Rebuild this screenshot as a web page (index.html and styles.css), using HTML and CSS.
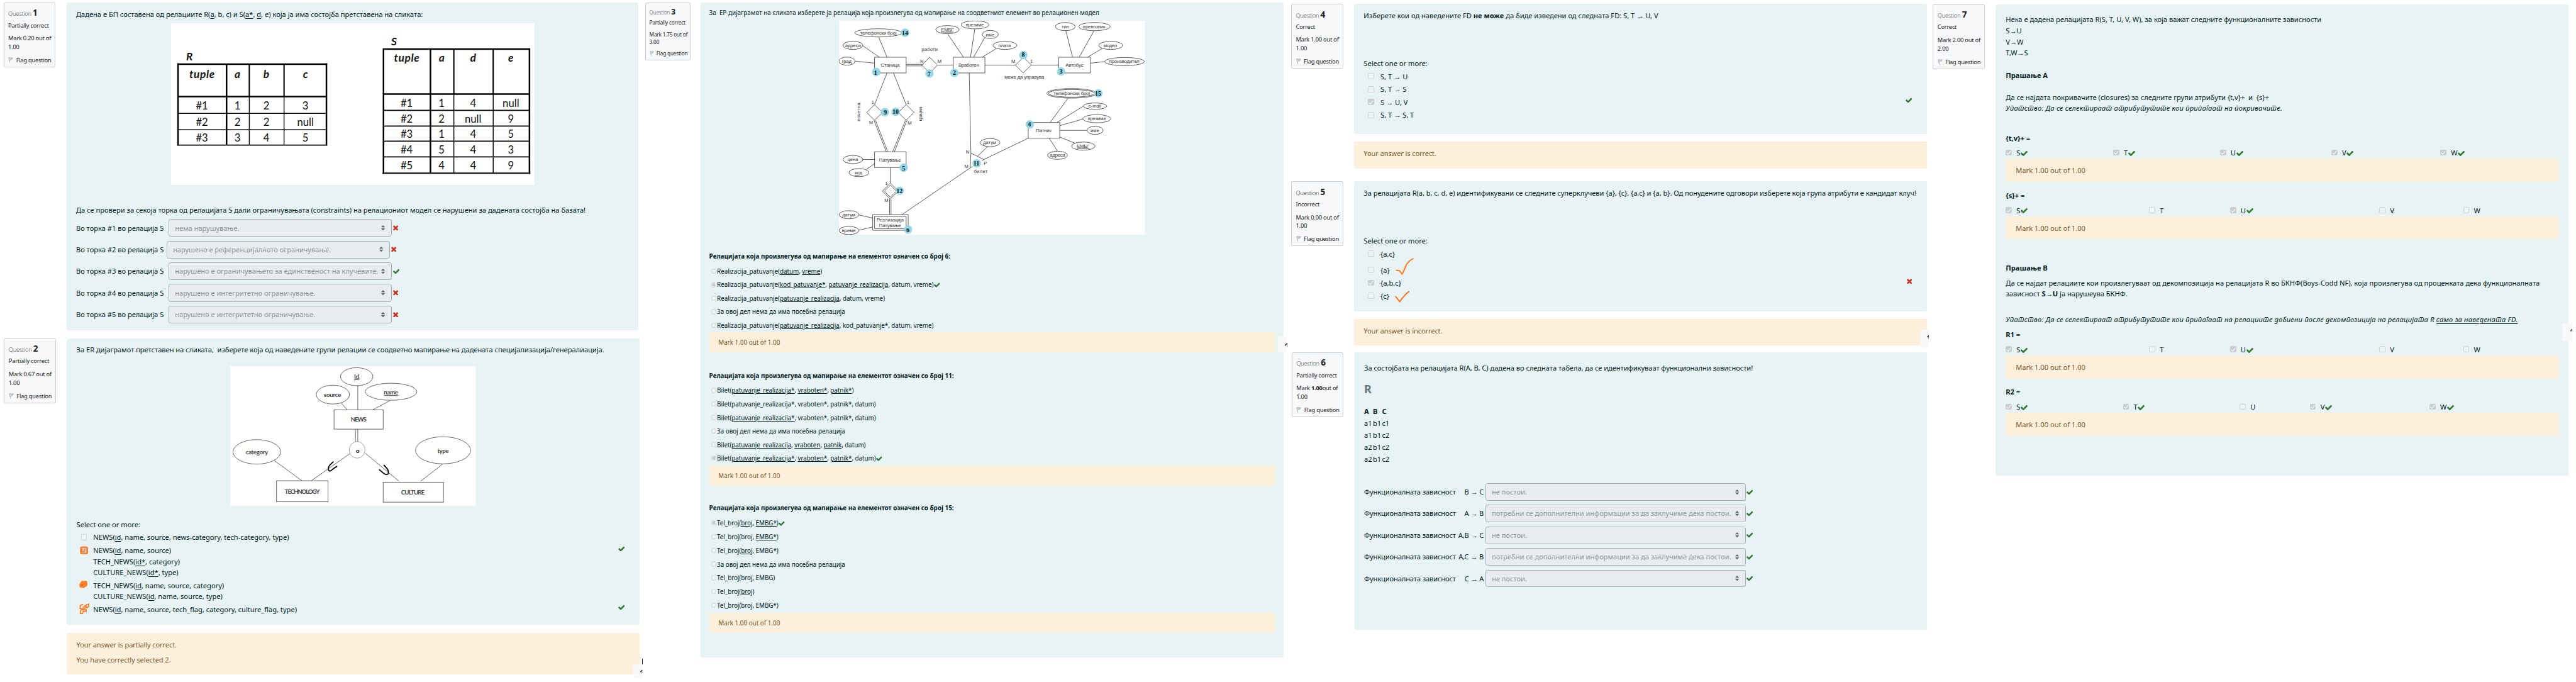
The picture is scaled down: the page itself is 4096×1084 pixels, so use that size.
FILE: index.html
```html
<!DOCTYPE html>
<html lang="mk">
<head>
<meta charset="utf-8">
<title>Quiz review</title>
<link rel="stylesheet" href="styles.css">
</head>
<body>
<svg class="defs" aria-hidden="true">
  <symbol id="tick" viewBox="120 240 1560 1240"><path d="M1671 566q0 40-28 68l-724 724-136 136q-28 28-68 28t-68-28l-136-136-362-362q-28-28-28-68t28-68l136-136q28-28 68-28t68 28l294 295 656-657q28-28 68-28t68 28l136 136q28 28 28 68z"/></symbol>
  <symbol id="cross" viewBox="300 230 1200 1200"><path d="M1490 1322q0 40-28 68l-136 136q-28 28-68 28t-68-28l-294-294-294 294q-28 28-68 28t-68-28l-136-136q-28-28-28-68t28-68l294-294-294-294q-28-28-28-68t28-68l136-136q28-28 68-28t68 28l294 294 294-294q28-28 68-28t68 28l136 136q28 28 28 68t-28 68l-294 294 294 294q28 28 28 68z" transform="translate(0 -94)"/></symbol>
  <symbol id="flag" viewBox="0 0 12 14"><path d="M1 1.2 4 13M1 1.2 11 1.6 8.6 4.6 3 7.6M3.2 3.2 8.6 4.6" fill="none" stroke="#868e96" stroke-width="1.1"/></symbol>
  <symbol id="sort" viewBox="0 0 9 12"><path d="M0 4.8 4.5 0 9 4.800zM0 7.200H9L4.500 12z" fill="#5f666c"/><path d="M.5 6H8.500" stroke="#9aa0a5" stroke-width=".8"/></symbol>
  <symbol id="up" viewBox="0 0 8 14"><path d="M8 0V14H5.600V5.500L0 11V7.500z" fill="#1d2125"/></symbol>
</svg>
<main class="board">

<div class="col col-a">
  <section class="question">
    <aside class="info"><p class="no">Question <b>1</b></p><p>Partially correct</p><p>Mark 0.20 out of<br>1.00</p><p class="flag"><svg><use href="#flag"/></svg><span>Flag question</span></p></aside>
    <div class="main">
      <div class="panel q1">
        <p class="line">Дадена е БП составена од релациите R(<u>a</u>, b, c) и S(<u>a*</u>, <u>d</u>, e) која ја има состојба претставена на сликата:</p>
        <svg class="pic pic-tables" viewBox="391 53.5 832 369.500">
          <rect x="391" y="53" width="832" height="371" fill="#fff"/>
          <g fill="none" stroke="#000">
            <path stroke-width="3.600" d="M405.500 147H748.500M407 221H746.500M407 145V333M746.500 145V333M518 147V332M875.500 112.400H1212.500M877 215.400H1211M877 111V398M1211 111V398M984.500 112V396"/>
            <path stroke-width="3" d="M570 147V221M649.500 147V221M1038 112V215M1128 112V215M875 396.400H1213"/>
            <path stroke-width="2.400" d="M407 259.600H746M407 297H746M405 332H748M877 252.700H1211M877 288.500H1211M877 323H1211M877 359H1211"/>
            <path stroke-width="2" d="M570 221V332M649.500 221V332M1038 215V396M1128 215V396"/>
          </g>
          <g class="th"><text x="433" y="138">R</text><text x="901" y="104">S</text><text x="461.600" y="178" textLength="58">tuple</text><text x="543" y="178">a</text><text x="609" y="178">b</text><text x="698.500" y="178">c</text><text x="930" y="141" textLength="58">tuple</text><text x="1010" y="141">a</text><text x="1082" y="141">d</text><text x="1168.500" y="141">e</text></g>
          <g class="td">
            <text x="461.600" y="251">#1</text><text x="543" y="251">1</text><text x="609" y="251">2</text><text x="698.500" y="251">3</text>
            <text x="461.600" y="288">#2</text><text x="543" y="288">2</text><text x="609" y="288">2</text><text x="698.500" y="288">null</text>
            <text x="461.600" y="324">#3</text><text x="543" y="324">3</text><text x="609" y="324">4</text><text x="698.500" y="324">5</text>
            <text x="930" y="245">#1</text><text x="1010" y="245">1</text><text x="1082" y="245">4</text><text x="1168.500" y="245">null</text>
            <text x="930" y="281.500">#2</text><text x="1010" y="281.500">2</text><text x="1082" y="281.500">null</text><text x="1168.500" y="281.500">9</text>
            <text x="930" y="316">#3</text><text x="1010" y="316">1</text><text x="1082" y="316">4</text><text x="1168.500" y="316">5</text>
            <text x="930" y="352">#4</text><text x="1010" y="352">5</text><text x="1082" y="352">4</text><text x="1168.500" y="352">3</text>
            <text x="930" y="387">#5</text><text x="1010" y="387">4</text><text x="1082" y="387">4</text><text x="1168.500" y="387">9</text>
          </g>
        </svg>
        <p class="line ask">Да се провери за секоја торка од релацијата S дали ограничувањата (constraints) на релациониот модел се нарушени за дадената состојба на базата!</p>
        <div class="selects">
          <div class="srow"><span class="lab">Во торка #1 во релација S</span><span class="select">нема нарушување.<svg><use href="#sort"/></svg></span><svg class="no-mark"><use href="#cross"/></svg></div>
          <div class="srow tight"><span class="lab">Во торка #2 во релација S</span><span class="select">нарушено е референцијалното ограничување.<svg><use href="#sort"/></svg></span><svg class="no-mark"><use href="#cross"/></svg></div>
          <div class="srow"><span class="lab">Во торка #3 во релација S</span><span class="select">нарушено е ограничувањето за единственост на клучевите.<svg><use href="#sort"/></svg></span><svg class="ok"><use href="#tick"/></svg></div>
          <div class="srow"><span class="lab">Во торка #4 во релација S</span><span class="select">нарушено е интегритетно ограничување.<svg><use href="#sort"/></svg></span><svg class="no-mark"><use href="#cross"/></svg></div>
          <div class="srow"><span class="lab">Во торка #5 во релација S</span><span class="select">нарушено е интегритетно ограничување.<svg><use href="#sort"/></svg></span><svg class="no-mark"><use href="#cross"/></svg></div>
        </div>
      </div>
    </div>
  </section>

  <section class="question second">
    <aside class="info"><p class="no">Question <b>2</b></p><p>Partially correct</p><p>Mark 0.67 out of<br>1.00</p><p class="flag"><svg><use href="#flag"/></svg><span>Flag question</span></p></aside>
    <div class="main">
      <div class="panel q2">
        <p class="line">За ER дијаграмот претставен на сликата,&nbsp; изберете која од наведените групи релации се соодветно мапирање на дадената специјализација/генералиација.</p>
        <svg class="pic pic-news" viewBox="527 838 562 320">
          <rect x="527" y="838" width="562" height="320" fill="#fff"/>
          <g fill="none" stroke="#555" stroke-width="1.300">
            <ellipse cx="816.500" cy="862" rx="37" ry="20.500"/><ellipse cx="895" cy="896.500" rx="59" ry="19.500"/><ellipse cx="762" cy="903" rx="38" ry="21.500"/>
            <ellipse cx="588" cy="1034" rx="54.500" ry="28"/><ellipse cx="1014" cy="1030.400" rx="63" ry="31"/><ellipse cx="817.500" cy="1029.400" rx="18" ry="19" stroke="#999"/>
            <rect x="764.600" y="938" width="112.400" height="44"/><rect x="633" y="1100" width="118" height="48"/><rect x="877" y="1103.400" width="138" height="45.600"/>
            <path d="M781.500 923 795 938M819 883V938M893 916.600 853 938M813.600 982V1010.500M819 982V1010.500M627 1053 691 1100M801 1038 712.600 1100M836 1037 913 1101M1013 1062 963 1101"/>
            <path stroke="#000" stroke-width="2.600" stroke-linecap="round" d="M762.700 1057C755 1063 751 1068 751.500 1073C752 1079 757 1079 761 1074L771 1067M879 1064.600C887 1072 891 1079 888.500 1084C886 1087 881 1086 877 1082L868.400 1074.800"/>
          </g>
          <g class="er"><text x="816.500" y="867" text-decoration="underline">Id</text><text x="895" y="903" text-decoration="underline" textLength="33">name</text><text x="761" y="908" textLength="39">source</text><text x="821" y="965" textLength="36">NEWS</text><text x="588" y="1039" textLength="51">category</text><text x="1014" y="1036" textLength="26">type</text><text x="819" y="1037" class="heavy">o</text><text x="692" y="1130" textLength="80">TECHNOLOGY</text><text x="945" y="1131.500" textLength="54">CULTURE</text></g>
        </svg>
        <p class="line pick">Select one or more:</p>
        <ul class="answers">
          <li><i class="box"></i><div>NEWS(<u>id</u>, name, source, news-category, tech-category, type)</div></li>
          <li><svg class="scribble" viewBox="0 0 24 26"><rect x="3.500" y="5.500" width="15" height="14.500" rx="3.500" fill="#c9c9c9" stroke="#fd7e26" stroke-width="3.500"/><path d="M6 9V16L11 15.500 13 9" fill="none" stroke="#fd7e26" stroke-width="2.500"/></svg><div>NEWS(<u>id</u>, name, source)<br>TECH_NEWS(<u>id*</u>, category)<br>CULTURE_NEWS(<u>id*</u>, type)</div><svg class="ok side"><use href="#tick"/></svg></li>
          <li><svg class="scribble" viewBox="0 0 24 26"><path d="M5 4 17 3.500 18.500 13 11 19 2 18 0 12.500 3 8z" fill="#fd7e26" stroke="#fd7e26"/><rect x="6" y="12" width="1.600" height="1.200"/><path d="M12 18.500Q18 18 18 14" fill="none" stroke="#ccc"/></svg><div>TECH_NEWS(<u>id</u>, name, source, category)<br>CULTURE_NEWS(<u>id</u>, name, source, type)</div></li>
          <li><svg class="scribble" viewBox="0 0 24 26"><path d="M9 2.500 3 4 1.500 12 8 12.500 6 15 3 16 2.500 23.500 7.500 23 9 18 16 18.500 16 14.500 8 14.500 13 10.500 19 10 13 6 8 9.500M12 6 21.500 1.500 21.500 8 15 9" fill="none" stroke="#fd7e26" stroke-width="2.600" stroke-linejoin="round"/></svg><div>NEWS(<u>id</u>, name, source, tech_flag, category, culture_flag, type)</div><svg class="ok side"><use href="#tick"/></svg></li>
        </ul>
      </div>
      <div class="feedback two"><p class="line">Your answer is partially correct.</p><p class="line">You have correctly selected 2.</p></div>
    </div>
  </section>
  <div class="totop top-a"><svg><use href="#up"/></svg></div>
  <i class="edge"></i>
</div>

<div class="col col-b">
  <section class="question">
    <aside class="info small"><p class="no">Question <b>3</b></p><p>Partially correct</p><p>Mark 1.75 out of<br>3.00</p><p class="flag"><svg><use href="#flag"/></svg><span>Flag question</span></p></aside>
    <div class="main">
      <div class="panel q3">
        <p class="line">За&nbsp; ЕР дијаграмот на сликата изберете ја релација која произлегува од мапирање на соодветниот елемент во релационен модел</p>
        <svg class="pic pic-bus" viewBox="1920 48 700 489">
          <rect x="1920" y="48" width="700" height="489" fill="#fff"/>
          <g transform="matrix(.4719 0 0 .3333 1900 30)" class="shapes">
            <path d="M235 165 275 304M158 225 238 304M120 331 215 345M368 353H447M368 364H447M520 358H597M568 142 646 304M701 110 680 304M749 170 695 304M806 244 737 304M750 358H898M975 358H1108M1142 122 1175 304M1279 122 1207 304M1319 244 1248 304M1331 334 1262 345M275 413 215 629M307 413 368 629M212 737 272 953M219 737 279 953M365 737 303 953M372 737 311 953M158 1006H215M174 1076 215 1034M291 1061V1170M288 1278V1385M295 1278V1385M139 1386 206 1408M139 1491 206 1469M348 1384 690 1053M674 413 682 962 679 1061M682 962 745 1006 735 1014M745 1006 960 860M763 918 713 985M1152 587 1066 752M1226 641 1099 752M1226 728 1113 774M1245 806H1113M1187 894 1113 852M1102 949 1062 860"/>
            <g class="solid">
              <path d="M482 304 520 358 482 413 444 358zM937 304 975 358 936 412 898 358zM215 629 253 683 215 737 177 683zM368 629 406 683 368 737 330 683zM291 1168 330 1223 291 1277 253 1223zM291 1181 321 1223 291 1265 262 1223z"/>
              <path d="M215 304H368V412H215zM597 304H750V412H597zM1108 304H1262V412H1108zM960 752H1113V860H960zM215 953H368V1061H215zM206 1384H378V1492H206zM215 1397H368V1480H215z"/>
              <ellipse cx="233" cy="137" rx="114" ry="28"/><ellipse cx="110" cy="223" rx="48" ry="28"/><ellipse cx="81" cy="331" rx="39" ry="28"/><ellipse cx="568" cy="115" rx="57" ry="28"/><ellipse cx="702" cy="82" rx="67" ry="28"/><ellipse cx="776" cy="148" rx="39" ry="28"/><ellipse cx="847" cy="223" rx="58" ry="28"/><ellipse cx="1140" cy="94" rx="48" ry="28"/><ellipse cx="1281" cy="94" rx="76" ry="28"/><ellipse cx="1360" cy="223" rx="58" ry="28"/><ellipse cx="1427" cy="334" rx="96" ry="28"/><ellipse cx="1170" cy="552" rx="120" ry="33"/><ellipse cx="1170" cy="552" rx="112" ry="26"/><ellipse cx="1284" cy="640" rx="57" ry="22"/><ellipse cx="1293" cy="726" rx="67" ry="28"/><ellipse cx="1284" cy="806" rx="39" ry="28"/><ellipse cx="1227" cy="914" rx="57" ry="28"/><ellipse cx="1102" cy="977" rx="48" ry="28"/><ellipse cx="775" cy="890" rx="48" ry="28"/><ellipse cx="110" cy="1006" rx="48" ry="28"/><ellipse cx="139" cy="1096" rx="48" ry="28"/><ellipse cx="91" cy="1385" rx="48" ry="28"/><ellipse cx="91" cy="1493" rx="48" ry="28"/>
            </g>
          </g>
          <g class="dots"><circle cx="2005.200" cy="165" r="9.600"/><circle cx="2184" cy="167" r="9.600"/><circle cx="2428" cy="164" r="9.600"/><circle cx="2356.800" cy="285" r="9.600"/><circle cx="2068" cy="384" r="9.600"/><circle cx="2078" cy="525.300" r="9.600"/><circle cx="2127" cy="168.700" r="9.600"/><circle cx="2341.700" cy="126.300" r="9.600"/><circle cx="2025" cy="257" r="9.600"/><circle cx="2049.600" cy="256.300" r="9.600"/><circle cx="2235" cy="374" r="9.600"/><circle cx="2058.600" cy="436.700" r="9.600"/><circle cx="2071.300" cy="75.300" r="9.600"/><circle cx="2513.500" cy="214" r="9.600"/></g>
          <g class="bus">
            <text x="2010" y="79.500" textLength="83">телефонски број</text><text x="1952" y="108" textLength="36">адреса</text><text x="1937.800" y="144" textLength="22">град</text><text x="2127.500" y="117" textLength="37">работи</text><text x="2037.300" y="153.700" textLength="42.500">Станица</text><text x="2109.500" y="144">N</text><text x="2150" y="144">M</text><text x="2217" y="153.700" textLength="47.500">Вработен</text><text x="2168" y="72" textLength="29" text-decoration="underline">ЕМБГ</text><text x="2230.800" y="61.500" textLength="42">презиме</text><text x="2266" y="83.500" textLength="20">име</text><text x="2299" y="108" textLength="28.500">плата</text><text x="2319" y="145">M</text><text x="2360.600" y="145">1</text><text x="2344" y="180.500" textLength="90.600">може да управува</text><text x="2458.700" y="153.700" textLength="40.600">Автобус</text><text x="2438" y="65" textLength="17">тип</text><text x="2503.600" y="65" textLength="51">превозник</text><text x="2540.800" y="108.500" textLength="31">модел</text><text x="2573" y="145" textLength="69">производител</text><text x="2452.600" y="218.300" textLength="83">телефонски број</text><text x="2505.400" y="247" textLength="30">e-mail</text><text x="2510" y="276" textLength="42">презиме</text><text x="2505.400" y="303" textLength="20">име</text><text x="2388.400" y="303" textLength="35.400">Патник</text><text x="2478.500" y="339" textLength="29" text-decoration="underline">ЕМБГ</text><text x="2420" y="359.500" textLength="35">адреса</text><text x="2264.800" y="330.500" textLength="30">датум</text><text x="2214.300" y="352">N</text><text x="2211.500" y="385">M</text><text x="2254.900" y="378">P</text><text x="2244.500" y="396.300" textLength="31">билет</text><text x="2036.900" y="369.700" textLength="50">Патување</text><text x="1951.400" y="369.500" textLength="24">цена</text><text x="1964.700" y="399.500" textLength="17" text-decoration="underline">код</text><text transform="translate(1969.500 256.700) rotate(-90)" textLength="42.700">почетна</text><text transform="translate(2109.500 261) rotate(-90)" textLength="32.700">крајна</text><text x="1997.700" y="237.500">1</text><text x="2078" y="238.500">1</text><text x="1993.400" y="284">M</text><text x="2081.700" y="285">M</text><text x="2028.400" y="424">1</text><text x="2028.400" y="462.500">M</text><text x="1942.500" y="495.500" textLength="30">датум</text><text x="1942.500" y="531.500" textLength="31">време</text><text x="2037.300" y="507" textLength="62">Реализација</text><text x="2036.900" y="520" textLength="50">Патување</text>
          </g>
          <g class="nums"><text x="2004" y="172">1</text><text x="2184" y="172">2</text><text x="2428" y="169.500">3</text><text x="2355.500" y="290">4</text><text x="2068" y="390">5</text><text x="2077.500" y="531">6</text><text x="2126" y="174">7</text><text x="2341.700" y="130">8</text><text x="2026" y="262">9</text><text x="2049.600" y="261.500">10</text><text x="2234.500" y="379">11</text><text x="2058.600" y="442">12</text><text x="2071" y="80.500">14</text><text x="2513" y="219.500">15</text></g>
        </svg>
        <h3 class="line h-one">Релацијата која произлегува од мапирање на елементот означен со број 6:</h3>
        <ul class="radios">
          <li><i></i><span>Realizacija_patuvanje(<u>datum</u>, <u>vreme</u>)</span></li>
          <li><i class="on"></i><span>Realizacija_patuvanje(<u>kod_patuvanje*</u>, <u>patuvanje_realizacija</u>, datum, vreme)</span><svg class="ok"><use href="#tick"/></svg></li>
          <li><i></i><span>Realizacija_patuvanje(<u>patuvanje_realizacija</u>, datum, vreme)</span></li>
          <li><i></i><span class="mk">За овој дел нема да има посебна релација</span></li>
          <li><i></i><span>Realizacija_patuvanje(<u>patuvanje_realizacija</u>, kod_patuvanje*, datum, vreme)</span></li>
        </ul>
        <div class="mark">Mark 1.00 out of 1.00</div>
        <h3 class="line h-two">Релацијата која произлегува од мапирање на елементот означен со број 11:</h3>
        <ul class="radios">
          <li><i></i><span>Bilet(<u>patuvanje_realizacija*</u>, <u>vraboten*</u>, <u>patnik*</u>)</span></li>
          <li><i></i><span>Bilet(patuvanje_realizacija*, vraboten*, patnik*, datum)</span></li>
          <li><i></i><span>Bilet(<u>patuvanje_realizacija*</u>, vraboten*, patnik*, datum)</span></li>
          <li><i></i><span class="mk">За овој дел нема да има посебна релација</span></li>
          <li><i></i><span>Bilet(<u>patuvanje_realizacija</u>, <u>vraboten</u>, <u>patnik</u>, datum)</span></li>
          <li><i class="on"></i><span>Bilet(<u>patuvanje_realizacija*</u>, <u>vraboten*</u>, <u>patnik*</u>, datum)</span><svg class="ok"><use href="#tick"/></svg></li>
        </ul>
        <div class="mark">Mark 1.00 out of 1.00</div>
        <h3 class="line h-three">Релацијата која произлегува од мапирање на елементот означен со број 15:</h3>
        <ul class="radios last">
          <li><i class="on"></i><span>Tel_broj(<u>broj</u>, <u>EMBG*</u>)</span><svg class="ok"><use href="#tick"/></svg></li>
          <li><i></i><span>Tel_broj(broj, <u>EMBG*</u>)</span></li>
          <li><i></i><span>Tel_broj(<u>broj</u>, EMBG*)</span></li>
          <li><i></i><span class="mk">За овој дел нема да има посебна релација</span></li>
          <li><i></i><span>Tel_broj(broj, EMBG)</span></li>
          <li><i></i><span>Tel_broj(<u>broj</u>)</span></li>
          <li><i></i><span>Tel_broj(broj, EMBG*)</span></li>
        </ul>
        <div class="mark">Mark 1.00 out of 1.00</div>
      </div>
    </div>
  </section>
  <div class="totop top-b"><svg><use href="#up"/></svg></div>
</div>

<div class="col col-c">
  <section class="question">
    <aside class="info"><p class="no">Question <b>4</b></p><p>Correct</p><p>Mark 1.00 out of<br>1.00</p><p class="flag"><svg><use href="#flag"/></svg><span>Flag question</span></p></aside>
    <div class="main">
      <div class="panel q4">
        <p class="line">Изберете кои од наведените FD <b>не може</b> да биде изведени од следната FD: S, T → U, V</p>
        <p class="line pick">Select one or more:</p>
        <ul class="answers">
          <li><i class="box"></i><div>S, T → U</div></li>
          <li><i class="box"></i><div>S, T → S</div></li>
          <li><i class="box on"></i><div>S → U, V</div><svg class="ok side"><use href="#tick"/></svg></li>
          <li><i class="box"></i><div>S, T → S, T</div></li>
        </ul>
      </div>
      <div class="feedback">Your answer is correct.</div>
    </div>
  </section>
  <section class="question fifth">
    <aside class="info"><p class="no">Question <b>5</b></p><p>Incorrect</p><p>Mark 0.00 out of<br>1.00</p><p class="flag"><svg><use href="#flag"/></svg><span>Flag question</span></p></aside>
    <div class="main">
      <div class="panel q5">
        <p class="line snug">За релацијата R(a, b, c, d, e) идентификувани се следните суперклучеви {a}, {c}, {a,c} и {a, b}. Од понудените одговори изберете која група атрибути е кандидат клуч!</p>
        <p class="line pick">Select one or more:</p>
        <ul class="answers">
          <li><i class="box"></i><div>{a,c}</div></li>
          <li class="wide"><i class="box"></i><div>{a}</div><svg class="pen pen-a" viewBox="0 0 42 40"><path d="M2 28.500 9 29 15 37C20 28 22 22 25 15C29 10 32 5 40 2"/></svg></li>
          <li><i class="box on"></i><div>{a,b,c}</div><svg class="no-mark side"><use href="#cross"/></svg></li>
          <li><i class="box"></i><div>{c}</div><svg class="pen pen-b" viewBox="0 0 34 28"><path d="M2 14 11 25C16 18 23 9 32 2"/></svg></li>
        </ul>
      </div>
      <div class="feedback low">Your answer is incorrect.</div>
    </div>
  </section>
  <section class="question sixth">
    <aside class="info"><p class="no">Question <b>6</b></p><p>Partially correct</p><p>Mark <b class="patch">1.00</b>out of<br>1.00</p><p class="flag"><svg><use href="#flag"/></svg><span>Flag question</span></p></aside>
    <div class="main">
      <div class="panel q6">
        <p class="line snug">За состојбата на релацијата R(A, B, C) дадена во следната табела, да се идентификуваат функционални зависности!</p>
        <h2>R</h2>
        <div class="tuples">
          <b>A</b><b>B</b><b>C</b>
          <span>a1</span><span>b1</span><span>c1</span>
          <span>a1</span><span>b1</span><span>c2</span>
          <span>a2</span><span>b1</span><span>c2</span>
          <span>a2</span><span>b1</span><span>c2</span>
        </div>
        <div class="selects deps">
          <div class="srow"><span class="lab"><span>Функционалната зависност</span><span>B → C</span></span><span class="select">не постои.<svg><use href="#sort"/></svg></span><svg class="ok"><use href="#tick"/></svg></div>
          <div class="srow"><span class="lab"><span>Функционалната зависност</span><span>A → B</span></span><span class="select">потребни се дополнителни информации за да заклучиме дека постои.<svg><use href="#sort"/></svg></span><svg class="ok"><use href="#tick"/></svg></div>
          <div class="srow"><span class="lab"><span>Функционалната зависност</span><span>A,B → C</span></span><span class="select">не постои.<svg><use href="#sort"/></svg></span><svg class="ok"><use href="#tick"/></svg></div>
          <div class="srow"><span class="lab"><span>Функционалната зависност</span><span>A,C → B</span></span><span class="select">потребни се дополнителни информации за да заклучиме дека постои.<svg><use href="#sort"/></svg></span><svg class="ok"><use href="#tick"/></svg></div>
          <div class="srow"><span class="lab"><span>Функционалната зависност</span><span>C → A</span></span><span class="select">не постои.<svg><use href="#sort"/></svg></span><svg class="ok"><use href="#tick"/></svg></div>
        </div>
      </div>
    </div>
  </section>
  <div class="totop top-c"><svg><use href="#up"/></svg></div>
</div>

<div class="col col-d">
  <section class="question">
    <aside class="info"><p class="no">Question <b>7</b></p><p>Correct</p><p>Mark 2.00 out of<br>2.00</p><p class="flag"><svg><use href="#flag"/></svg><span>Flag question</span></p></aside>
    <div class="main">
      <div class="panel q7">
        <p class="line">Нека е дадена релацијата R(S, T, U, V, W), за која важат следните функционалните зависности</p>
        <p class="line">S→U</p><p class="line">V→W</p><p class="line">T,W→S</p>
        <h3 class="line part-a">Прашање A</h3>
        <p class="line closures">Да се најдата покривачите (closures) за следните групи атрибути {t,v}+&nbsp; и&nbsp; {s}+</p>
        <p class="line hint"><em>Упатство: Да се селектираат атрибутутите кои припаѓаат на покривачите.</em></p>
        <p class="line set-tv"><b>{t,v}+</b> =</p>
        <div class="checks all"><label><i class="box on"></i>S<svg class="ok"><use href="#tick"/></svg></label><label><i class="box on"></i>T<svg class="ok"><use href="#tick"/></svg></label><label><i class="box on"></i>U<svg class="ok"><use href="#tick"/></svg></label><label><i class="box on"></i>V<svg class="ok"><use href="#tick"/></svg></label><label><i class="box on"></i>W<svg class="ok"><use href="#tick"/></svg></label></div>
        <div class="mark">Mark 1.00 out of 1.00</div>
        <p class="line set-s"><b>{s}+</b> =</p>
        <div class="checks two"><label><i class="box on"></i>S<svg class="ok"><use href="#tick"/></svg></label><label><i class="box"></i>T</label><label><i class="box on"></i>U<svg class="ok"><use href="#tick"/></svg></label><label><i class="box"></i>V</label><label><i class="box"></i>W</label></div>
        <div class="mark">Mark 1.00 out of 1.00</div>
        <h3 class="line part-b">Прашање B</h3>
        <p class="line bcnf">Да се најдат релациите кои произлегуваат од декомпозиција на релацијата R во БКНФ(Boys-Codd NF), која произлегува од проценката дека функционалната<br>зависност <b>S→U</b> ја нарушеува БКНФ.</p>
        <p class="line hint-b"><em>Упатство: Да се селектираат атрибутутите кои припаѓаат на релациите добиени после декомпозиција на релацијата R <u>само за наведената FD.</u></em></p>
        <p class="line set-r1"><b>R1</b> =</p>
        <div class="checks two"><label><i class="box on"></i>S<svg class="ok"><use href="#tick"/></svg></label><label><i class="box"></i>T</label><label><i class="box on"></i>U<svg class="ok"><use href="#tick"/></svg></label><label><i class="box"></i>V</label><label><i class="box"></i>W</label></div>
        <div class="mark">Mark 1.00 out of 1.00</div>
        <p class="line set-r2"><b>R2</b> =</p>
        <div class="checks four"><label><i class="box on"></i>S<svg class="ok"><use href="#tick"/></svg></label><label><i class="box on"></i>T<svg class="ok"><use href="#tick"/></svg></label><label><i class="box"></i>U</label><label><i class="box on"></i>V<svg class="ok"><use href="#tick"/></svg></label><label><i class="box on"></i>W<svg class="ok"><use href="#tick"/></svg></label></div>
        <div class="mark">Mark 1.00 out of 1.00</div>
      </div>
    </div>
  </section>
  <div class="totop top-d"><svg><use href="#up"/></svg></div>
</div>
</main>
</body>
</html>
```
FILE: styles.css
```css
/* One rem is ten design pixels; the board is 589.2rem wide and 156rem high. */
html { font-size: 6.95px; }
* { box-sizing: border-box; }
body { margin: 0; background: #fff; color: #001a1e; font-family: "Noto Sans", "Open Sans", sans-serif; font-size: 1.6rem; line-height: 2.5rem; overflow: hidden; }
p, h2, h3, ul { margin: 0; padding: 0; list-style: none; font-size: inherit; }
svg { display: block; flex: none; }
u { text-underline-offset: .15em; }
.defs { position: absolute; width: 0; height: 0; }

.board { display: flex; width: 589.2rem; height: 156rem; }
.col { position: relative; flex: none; }
.col-a { width: 147rem; padding: .6rem 0 0 .8rem; }
.col-b { width: 147.6rem; padding: .6rem 0 0 .6rem; }
.col-c { width: 146.8rem; padding: .9rem 0 0 .8rem; }
.col-d { width: 147.8rem; padding: 1rem 0 0 .8rem; }

.question { display: flex; align-items: flex-start; gap: 2.5rem; white-space: nowrap; }
.second { margin: 1.9rem 0 0 .1rem; }
.fifth { margin-top: 3rem; }
.sixth { margin: 1.6rem 0 0 .1rem; }
.col-b .question { gap: 2.2rem; }

.info { flex: none; width: 11.9rem; height: 11.05em; padding: 1em .7em 0; border: 1px solid #cad0d7; border-radius: .3rem; background: #f8f9fb; color: #1d2125; font-size: 1.34rem; line-height: 1.48em; letter-spacing: -.024em; }
.info.small { width: 10.45rem; font-size: 1.19rem; }
.info .no { height: 1.48em; margin-bottom: .58em; font-size: 1em; color: #4a4f54; font-weight: 300; }
.info .no b { font-size: 1.45em; line-height: 1; color: #1d2125; font-weight: 700; }
.info p + p + p { margin-top: .74em; }
.flag { display: flex; align-items: center; gap: .45em; }
.flag svg { width: .9em; height: 1em; }
.patch { background: #fff; }

.panel { background: #e7f3f5; border-radius: .4rem; padding: 0 2.2rem; }
.line { min-height: 2.5rem; }
.snug { letter-spacing: -.0065rem; }
h3 { font-weight: 700; }
.pic text { text-anchor: middle; }
.feedback { margin-top: 1.8rem; height: 6.1rem; padding: 1.45rem 2.2rem; border-radius: .4rem; background: #fcefdc; color: #7d5a29; letter-spacing: -.018rem; }
.feedback.low { height: 6rem; }
.feedback.two { height: 9.5rem; }
.feedback.two .line + .line { margin-top: .95rem; }
.mark { border-radius: .4rem; background: #fcefdc; color: #7d5a29; }
.ok { fill: #357a32; width: 1.5rem; height: 1.2rem; }
.no-mark { fill: #ca3120; width: 1.2rem; height: 1.2rem; }

/* answer lists */
.answers { display: flex; flex-direction: column; gap: .5rem; margin-top: .5rem; }
.answers li { position: relative; display: flex; }
.answers div { margin-left: 3.85rem; }
.box { display: block; width: 1.4rem; height: 1.4rem; border: 1px solid #cfd2d4; border-radius: .3rem; background: #f1f4f5; }
.box.on { border-color: #cbcccd; background: #cbcccd; display: grid; place-items: center; }
.box.on::after { content: ""; width: .4rem; height: .8rem; border: solid #fff; border-width: 0 .16rem .16rem 0; transform: translateY(-.1rem) rotate(40deg); }
.answers .box { position: absolute; left: 1rem; top: .5rem; }
.scribble { position: absolute; left: .6rem; top: -.1rem; width: 2.4rem; height: 2.6rem; }
.side { margin: .2rem 1.1rem 0 auto; align-self: flex-start; }
.side.no-mark { margin-right: 1.2rem; }
.pen { position: absolute; fill: none; stroke: #fd7e26; stroke-width: 3; stroke-linecap: round; }
.pen-a { left: 7.3rem; top: -1.6rem; width: 4.2rem; height: 4rem; }
.pen-b { left: 7.1rem; top: 0; width: 3.4rem; height: 2.8rem; }

/* drop-downs */
.selects { display: flex; flex-direction: column; gap: .88rem; margin-top: .8rem; }
.srow { display: flex; align-items: center; height: 4.07rem; }
.lab { width: 21.2rem; flex: none; }
.tight .lab { width: 20.75rem; }
.select { display: flex; align-items: center; justify-content: space-between; width: 51.1rem; height: 100%; padding: 0 1.45rem 0 1.3rem; margin-right: .3rem; border: 1px solid #a4afb5; border-radius: .5rem; background: #e8ecef; color: #8d959b; letter-spacing: -.004rem; }
.select svg { width: .9rem; height: 1.2rem; }
.srow .ok { margin-left: -.1rem; }

.q1 { width: 130.9rem; height: 74.9rem; padding-top: 1.45rem; }
.pic-tables { width: 83.2rem; height: 36.95rem; margin: .8rem 0 0 21.7rem; }
.ask { margin-top: 4.5rem; }
.th, .td { font-family: Lato, sans-serif; font-size: 24px; fill: #111; }
.th { font-weight: 700; font-style: italic; font-size: 25px; }

.q2 { width: 131rem; height: 65.5rem; padding-top: 1.35rem; }
.q2 > .line:first-child { letter-spacing: -.004rem; }
.pic-news { width: 56.2rem; height: 32rem; margin: 2.55rem 0 0 35.2rem; }
.er { font-family: Lato, sans-serif; font-size: 14px; font-weight: 700; fill: #444; }
.heavy { font-weight: 900; fill: #111; }
.q2 .pick { margin-top: 2.85rem; }

.q3 { width: 133.4rem; height: 149.8rem; padding: 1.15rem 2rem 0; font-size: 1.42rem; }
.pic-bus { width: 70rem; height: 48.9rem; margin: .55rem 0 0 29.75rem; }
.shapes { fill: none; stroke: #333; stroke-width: .8px; }
.shapes * { vector-effect: non-scaling-stroke; }
.solid { fill: #fff; }
.bus { font-family: "Liberation Sans", Arial, sans-serif; font-size: 11px; fill: #333; }
.dots { fill: #94d7e8; }
.nums { font-family: "Liberation Serif", serif; font-weight: 700; font-size: 14.500px; fill: #111; }
.h-one { margin-top: 3.75rem; }
.h-two { margin-top: 4.1rem; }
.h-three { margin-top: 4rem; }
.radios { margin-top: .6rem; letter-spacing: -.008rem; }
.radios .mk { letter-spacing: 0; }
.radios li { display: flex; align-items: center; height: 3.1rem; padding-left: .5rem; }
.radios.last li { height: 3.14rem; }
.radios i { flex: none; width: 1.2rem; height: 1.2rem; margin: -.2rem .1rem 0 0; border: 1px solid #cfd2d4; border-radius: 50%; background: #f1f4f5; }
.radios i.on { background: radial-gradient(#c4c6c7 0 50%, #f1f4f5 60%); }
.radios .ok { width: 1.4rem; height: 1.1rem; margin-left: .1rem; }
.q3 .mark { width: 129.5rem; height: 4.6rem; padding-left: 2.1rem; line-height: 4.7rem; }

.q4, .q5 { width: 131rem; height: 29.7rem; padding-top: 1.45rem; }
.q4 ~ .feedback, .q5 ~ .feedback { width: 131rem; }
.q4 .pick { margin-top: 8.4rem; }
.q4 .answers { gap: .45rem; }
.q5 .pick { margin-top: 8.35rem; }
.q5 .answers { gap: .45rem; }
.q5 .wide { margin-top: .8rem; }

.q6 { width: 131rem; height: 63.5rem; padding-top: 2.25rem; }
.q6 h2 { margin-top: 1.9rem; font-size: 2.6rem; line-height: 3.6rem; color: #6c757d; font-weight: 700; }
.tuples { display: grid; grid-template-columns: 2rem 2.1rem 2rem; grid-auto-rows: 2.72rem; align-items: center; margin-top: 1.88rem; }
.deps { gap: .95rem; margin-top: 4.16rem; }
.deps .srow { height: 4.01rem; }
.deps .lab { display: flex; justify-content: space-between; width: 27.75rem; padding-right: .4rem; letter-spacing: -.017rem; }
.deps .select { width: 59.6rem; margin-right: .2rem; }

.q7 { width: 131.1rem; height: 107.8rem; padding: 2.23rem 2.2rem 0 2.3rem; line-height: 2.53rem; }
.q7 .line { min-height: 2.53rem; }
.q7 em { letter-spacing: .0285rem; }
.part-a { margin-top: 2.64rem; }
.closures { margin-top: 2.47rem; }
.set-tv { margin-top: 4.29rem; }
.set-s { margin-top: 1.96rem; }
.part-b { margin-top: 5.32rem; }
.bcnf { margin-top: .86rem; }
.hint-b { margin-top: 3.3rem; }
.set-r1 { margin-top: .87rem; }
.set-r2 { margin-top: 1.8rem; }
.checks { display: grid; height: 2.53rem; align-items: center; margin: .85rem 0 .08rem; }
.checks label { display: flex; align-items: center; }
.checks .box { margin: -.2rem 1.05rem 0 0; }
.checks .ok { margin-left: .1rem; width: 1.6rem; height: 1.3rem; }
.all { grid-template-columns: 24.55rem 24.45rem 25.5rem 24.9rem 1fr; }
.two.checks { grid-template-columns: 32.8rem 18.5rem 34.15rem 19.2rem 1fr; }
.four { grid-template-columns: 26.8rem 26.7rem 16.05rem 27.4rem 1fr; }
.q7 .mark { width: 126.6rem; height: 5.23rem; padding-left: 2.3rem; line-height: 5.4rem; }
.q7 .set-r1 + .checks { margin: 1.03rem 0 .06rem; }
.q7 .set-r2 + .checks { margin: .97rem 0 .03rem; }

/* back-to-top buttons cut off at each column's edge */
.totop { position: absolute; padding-top: 1.2rem; border-radius: .5rem 0 0 .5rem; background: #f8f9fa; }
.totop svg { width: .7rem; height: 1.4rem; margin-left: auto; }
.top-a { left: 144.9rem; top: 151.9rem; width: 2.1rem; height: 3.2rem; }
.top-b { left: 145.4rem; top: 77rem; width: 2.2rem; height: 3.6rem; }
.top-c { left: 144.8rem; top: 75.4rem; width: 1.9rem; height: 4.1rem; }
.top-d { left: 144.8rem; top: 73.9rem; width: 2.3rem; height: 4.1rem; }
.top-c svg, .top-a svg, .top-d svg { width: .5rem; height: .9rem; }
.edge { position: absolute; left: 146.900rem; top: 150.700rem; width: .1rem; height: 1.300rem; background: #1d2125; }
```
